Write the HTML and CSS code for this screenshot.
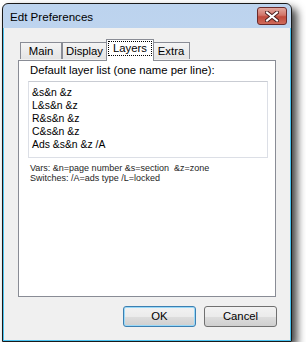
FILE: index.html
```html
<!DOCTYPE html>
<html lang="en">

<head>
    <meta charset="UTF-8">
    <title>Edt Preferences</title>
    <link rel="stylesheet" href="styles.css">
</head>

<body>
    <!-- Janela -->
    <div class="window">
        <div class="titlebar">
            <span class="title">Edt Preferences</span>
            <div class="close">
                <svg width="14" height="11" viewBox="0 0 14 11">
                    <path d="M2 1.5 L12 9.5 M12 1.5 L2 9.5" stroke="#4a1e1e" stroke-width="4" stroke-linecap="square" fill="none"/>
                    <path d="M2 1.5 L12 9.5 M12 1.5 L2 9.5" stroke="#ffffff" stroke-width="2" stroke-linecap="square" fill="none"/>
                </svg>
            </div>
        </div>

        <div class="client">
            <!-- Abas -->
            <div class="tabs">
                <div class="tab tab-main">Main</div>
                <div class="tab tab-display">Display</div>
                <div class="tab tab-layers active"><span class="focus">Layers</span></div>
                <div class="tab tab-extra">Extra</div>
            </div>

            <div class="panel">
                <div class="field-label">Default layer list (one name per line):</div>
                <div class="layer-list">
                    <div>&amp;s&amp;n &amp;z</div>
                    <div>L&amp;s&amp;n &amp;z</div>
                    <div>R&amp;s&amp;n &amp;z</div>
                    <div>C&amp;s&amp;n &amp;z</div>
                    <div>Ads &amp;s&amp;n &amp;z /A</div>
                </div>
                <div class="hint">
                    <div>Vars: &amp;n=page number &amp;s=section&nbsp; &amp;z=zone</div>
                    <div>Switches: /A=ads type /L=locked</div>
                </div>
            </div>

            <!-- Botoes -->
            <div class="buttons">
                <div class="btn btn-default">OK</div>
                <div class="btn">Cancel</div>
            </div>
        </div>
    </div>
</body>

</html>
```

FILE: styles.css
```css
* {
    margin: 0;
    padding: 0;
    box-sizing: border-box;
}

body {
    font-family: 'Liberation Sans', Arial, sans-serif;
    font-size: 11.3px;
    color: #000;
    background: #fff;
    padding: 3px 0 0 2px;
}

/* JANELA */
.window {
    width: 290px;
    height: 339px;
    border: 1px solid #1a1a1a;
    border-radius: 6px 6px 0 0;
    background: linear-gradient(#bcd3ee, #d2e2f5);
    box-shadow: 5px 5px 8px rgba(0, 0, 0, 0.75);
    display: flex;
    flex-direction: column;
}

.titlebar {
    height: 24px;
    display: flex;
    align-items: flex-start;
    justify-content: space-between;
    padding: 0 4px 0 7px;
}

.title {
    font-size: 11.6px;
    margin-top: 6px;
    color: #000;
}

.close {
    width: 30px;
    height: 18px;
    margin-top: 3px;
    border: 1px solid #6a2a2a;
    border-radius: 3px;
    background: linear-gradient(#e2a89f, #d27569 45%, #c04a3c 55%, #cf6a5a);
    display: flex;
    align-items: center;
    justify-content: center;
}

.client {
    flex: 1;
    background: #f0f0f0;
    border: 1px solid #4cc3f0;
    border-top: none;
    display: flex;
    flex-direction: column;
    padding: 11px 13px 13px 14px;
}

/* ABAS */
.tabs {
    display: flex;
    align-items: flex-end;
    height: 21px;
    padding-left: 2px;
}

.tab {
    height: 17px;
    margin-bottom: 1px;
    border: 1px solid #898c95;
    border-bottom: none;
    background: linear-gradient(#f4f4f4, #e4e4e4);
    text-align: center;
    line-height: 16px;
}

.tab-main {
    width: 42px;
}

.tab-display {
    width: 45px;
}

.tab-layers {
    width: 48px;
}

.tab-extra {
    width: 38px;
    margin-left: -1px;
}

.tab.active {
    height: 22px;
    margin: 0 -1px -1px;
    background: #fff;
    position: relative;
    z-index: 1;
}

.focus {
    display: block;
    margin: 1px 1px 0;
    height: 15px;
    line-height: 12px;
    border: 1px dotted #000;
}

/* PAINEL */
.panel {
    flex: 1;
    margin-right: 1px;
    background: #fff;
    border: 1px solid #898c95;
    padding: 2px 9px 0;
}

.field-label {
    line-height: 15px;
    padding-left: 2px;
}

.layer-list {
    width: 240px;
    height: 77px;
    margin-top: 3px;
    border: 1px solid #dcdfe6;
    border-top-color: #c9ccd3;
    padding: 4px 3px;
    font-size: 10.4px;
    line-height: 13px;
}

.hint {
    margin-top: 5px;
    padding-left: 2px;
    font-size: 9px;
    line-height: 10px;
    color: #1e1e1e;
}

/* BOTOES */
.buttons {
    display: flex;
    justify-content: flex-end;
    gap: 8px;
    margin-top: 9px;
}

.btn {
    width: 73px;
    height: 21px;
    border: 1px solid #707070;
    border-radius: 3px;
    background: linear-gradient(#f2f2f2, #ebebeb 50%, #dddddd 51%, #cfcfcf);
    text-align: center;
    line-height: 19px;
}

.btn-default {
    border-color: #3c7fb1;
    box-shadow: inset 0 0 0 1px #9ad9f8;
}
```
